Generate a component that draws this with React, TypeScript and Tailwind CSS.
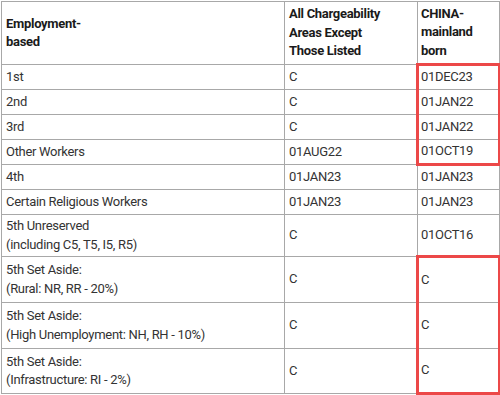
import React from 'react';

type Row = {
  label: string[];
  all: string;
  china: string;
  h: string;
  red?: 'top' | 'mid' | 'bottom';
};

const rows: Row[] = [
  { label: ['1st'], all: 'C', china: '01DEC23', h: 'h-[25px]', red: 'top' },
  { label: ['2nd'], all: 'C', china: '01JAN22', h: 'h-[25px]', red: 'mid' },
  { label: ['3rd'], all: 'C', china: '01JAN22', h: 'h-[25px]', red: 'mid' },
  { label: ['Other Workers'], all: '01AUG22', china: '01OCT19', h: 'h-[25px]', red: 'bottom' },
  { label: ['4th'], all: '01JAN23', china: '01JAN23', h: 'h-[25px]' },
  { label: ['Certain Religious Workers'], all: '01JAN23', china: '01JAN23', h: 'h-[25px]' },
  { label: ['5th Unreserved', '(including C5, T5, I5, R5)'], all: 'C', china: '01OCT16', h: 'h-[42px]' },
  { label: ['5th Set Aside:', '(Rural: NR, RR - 20%)'], all: 'C', china: 'C', h: 'h-[46px]', red: 'top' },
  { label: ['5th Set Aside:', '(High Unemployment: NH, RH - 10%)'], all: 'C', china: 'C', h: 'h-[46px]', red: 'mid' },
  { label: ['5th Set Aside:', '(Infrastructure: RI - 2%)'], all: 'C', china: 'C', h: 'h-[45px]', red: 'bottom' },
];

const redClass = (red?: Row['red']) => {
  if (!red) return 'border border-[#a8a8a8] pl-[3px]';
  const base = 'border-x-[3px] border-x-[#ec4848] pl-[2px]';
  if (red === 'top') return `${base} border-t-[3px] border-t-[#ec4848] border-b border-b-[#a8a8a8]`;
  if (red === 'bottom') return `${base} border-b-[3px] border-b-[#ec4848] border-t border-t-[#a8a8a8]`;
  return `${base} border-y border-y-[#a8a8a8]`;
};

const App: React.FC = () => {
  return (
    <div className="w-[500px] h-[395px] bg-white pt-px pl-px overflow-hidden" style={{ fontFamily: 'Roboto, "Liberation Sans", sans-serif' }}>
      <table className="border-collapse table-fixed w-[498px] text-[13px] leading-[18.5px] tracking-[-0.3px] text-[#333]">
        <colgroup>
          <col className="w-[283px]" />
          <col className="w-[133px]" />
          <col className="w-[82px]" />
        </colgroup>
        <thead>
          <tr className="h-[63px]">
            <th className="border border-[#a8a8a8] px-1 text-left align-middle font-bold text-[#1a1a1a]">
              Employment-<br />based
            </th>
            <th className="border border-[#a8a8a8] px-1 text-left align-middle font-bold text-[#1a1a1a]">
              All Chargeability<br />Areas Except<br />Those Listed
            </th>
            <th className="border border-[#a8a8a8] pl-[3px] text-left align-middle font-bold text-[#1a1a1a]">
              CHINA-<br />mainland<br />born
            </th>
          </tr>
        </thead>
        <tbody>
          {rows.map((r, i) => (
            <tr key={i} className={r.h}>
              <td className="border border-[#a8a8a8] px-1 align-middle">
                {r.label.map((l, j) => (
                  <div key={j}>{l}</div>
                ))}
              </td>
              <td className="border border-[#a8a8a8] px-1 align-middle">{r.all}</td>
              <td className={`${redClass(r.red)} align-middle`}>{r.china}</td>
            </tr>
          ))}
        </tbody>
      </table>
    </div>
  );
};

export default App;
